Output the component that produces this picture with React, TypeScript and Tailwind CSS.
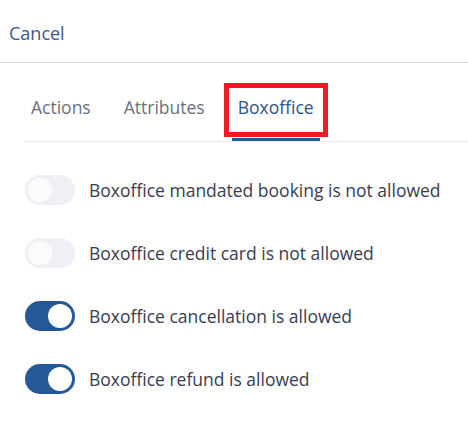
import { useState } from "react";

const tabs = ["Actions", "Attributes", "Boxoffice"];

const initialRules = [
  { id: "mandated", label: "Boxoffice mandated booking is not allowed", on: false },
  { id: "credit", label: "Boxoffice credit card is not allowed", on: false },
  { id: "cancel", label: "Boxoffice cancellation is allowed", on: true },
  { id: "refund", label: "Boxoffice refund is allowed", on: true },
];

const Toggle = ({ on, onClick }: { on: boolean; onClick: () => void }) => (
  <button
    type="button"
    onClick={onClick}
    className={`relative h-[30px] w-[50px] shrink-0 rounded-full transition-colors ${
      on ? "bg-[#255897]" : "bg-[#eff0f5]"
    }`}
  >
    <span
      className={`absolute top-[3px] h-[24px] w-[24px] rounded-full transition-all ${
        on ? "left-[23px] bg-white" : "left-[3px] bg-[#fbfbfd]"
      }`}
    />
  </button>
);

const App = () => {
  const [active, setActive] = useState("Boxoffice");
  const [rules, setRules] = useState(initialRules);

  return (
    <div className="h-[429px] w-[468px] overflow-hidden bg-white font-['Open_Sans',sans-serif]">
      <div className="flex h-[63px] items-center border-b border-[#d9d9e1] pl-[9px] pt-[4px]">
        <span className="text-[18px] leading-[24px] text-[#3b5789]">Cancel</span>
      </div>

      <div className="ml-[25px] flex gap-[21px] border-b border-[#ececf1] pt-[30px]">
        {tabs.map((tab) => (
          <div key={tab} className="relative">
            <button
              type="button"
              onClick={() => setActive(tab)}
              className={`px-[6px] pb-[20px] text-[17.5px] leading-[28px] ${
                active === tab ? "text-[#2b5390]" : "text-[#6a6f7e]"
              }`}
            >
              {tab}
            </button>
            {active === tab && (
              <span className="absolute bottom-0 left-0 h-[3px] w-full bg-[#255897]" />
            )}
            {tab === "Boxoffice" && (
              <span className="pointer-events-none absolute left-[-8px] top-[-10px] h-[54px] w-[104px] border-[5px] border-[#ec1c24]" />
            )}
          </div>
        ))}
      </div>

      <div className="flex flex-col gap-[33px] pl-[25px] pt-[33px]">
        {rules.map((rule) => (
          <div key={rule.id} className="flex items-center gap-[14px]">
            <Toggle
              on={rule.on}
              onClick={() =>
                setRules(
                  rules.map((r) => (r.id === rule.id ? { ...r, on: !r.on } : r))
                )
              }
            />
            <span className="text-[17.5px] leading-[24px] text-[#383d52]">{rule.label}</span>
          </div>
        ))}
      </div>
    </div>
  );
};

export default App;
